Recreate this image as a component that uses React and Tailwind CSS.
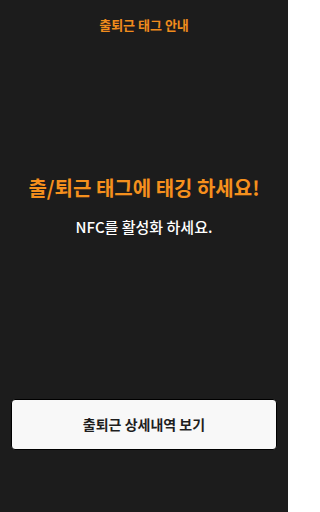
export default function App() {
  const font = { fontFamily: '"Noto Sans CJK KR", "Noto Sans", sans-serif' };
  return (
    <div className="w-[288px] h-[512px] bg-[#1c1c1c] flex flex-col" style={font}>
      <div className="h-12 flex items-center justify-center">
        <span className="text-[13px] font-bold text-[#f08c1c] leading-none">출퇴근 태그 안내</span>
      </div>
      <div className="mt-[126px] flex flex-col items-center">
        <div className="text-[20px] leading-[28px] font-bold text-[#f5901d]">출/퇴근 태그에 태깅 하세요!</div>
        <div className="mt-[14px] text-[15px] leading-[22px] font-medium text-white">NFC를 활성화 하세요.</div>
      </div>
      <div className="mt-auto mb-[62px] px-[11px]">
        <div className="h-[51px] rounded-[4px] bg-[#f8f8f8] border border-black flex items-center justify-center">
          <span className="text-[14px] font-bold text-[#1e1e1e]">출퇴근 상세내역 보기</span>
        </div>
      </div>
    </div>
  );
}
